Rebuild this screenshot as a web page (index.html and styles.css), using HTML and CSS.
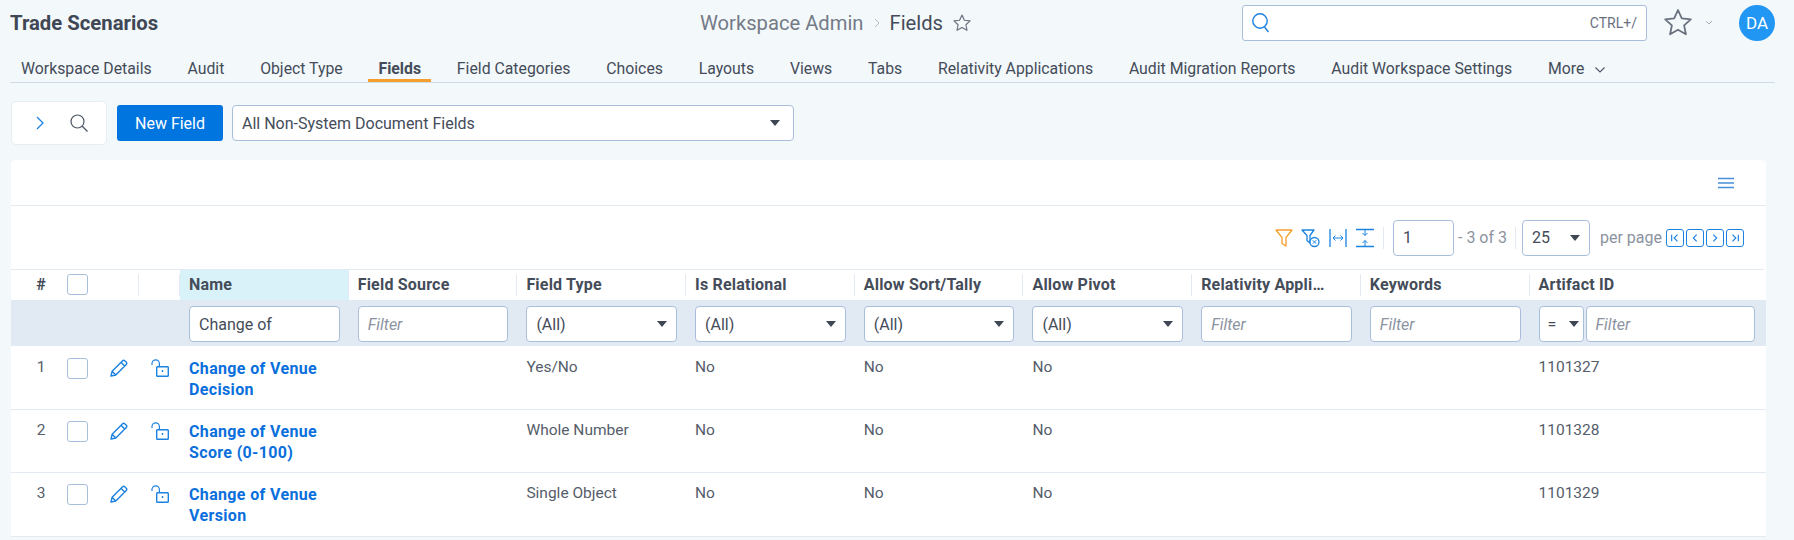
FILE: index.html
```html
<!DOCTYPE html>
<html lang="en">
<head>
<meta charset="utf-8">
<title>Fields</title>
<link rel="stylesheet" href="styles.css">
</head>
<body>
<header class="top">
  <div class="title">Trade Scenarios</div>
  <div class="crumbs">
    <span class="crumb">Workspace Admin</span>
    <svg class="crumb-sep" width="6" height="10" viewBox="0 0 6 10"><path d="M1 1l4 4-4 4" fill="none" stroke="#b4bcc8"/></svg>
    <span class="crumb current">Fields</span>
    <svg class="crumb-star" width="20" height="20" viewBox="0 0 24 24"><path d="M12 2.500l2.900 6.200 6.800.8-5 4.600 1.300 6.700-6-3.300-6 3.300 1.300-6.700-5-4.600 6.800-.8z" fill="none" stroke="#69717f" stroke-width="1.400" stroke-linejoin="round"/></svg>
  </div>
  <div class="global-search">
    <svg width="20" height="22" viewBox="0 0 20 22"><circle cx="9" cy="9" r="7.200" fill="none" stroke="#1b82e0" stroke-width="1.400"/><path d="M13.500 15l4 5" stroke="#1b82e0" stroke-width="1.400"/></svg>
    <span class="shortcut">CTRL+/</span>
  </div>
  <svg class="fav" width="30" height="30" viewBox="0 0 30 30"><path d="M15 2l3.800 8.300 9 1-6.700 6.100 1.800 8.900-7.900-4.500-7.900 4.500 1.800-8.900-6.700-6.100 9-1z" fill="none" stroke="#69717f" stroke-width="1.800" stroke-linejoin="round"/></svg>
  <svg class="fav-caret" width="8" height="6" viewBox="0 0 8 6"><path d="M1 1l3 3 3-3" fill="none" stroke="#a9b1bd"/></svg>
  <div class="avatar">DA</div>
</header>

<nav class="tabs">
  <a class="tab">Workspace Details</a>
  <a class="tab">Audit</a>
  <a class="tab">Object Type</a>
  <a class="tab active">Fields</a>
  <a class="tab">Field Categories</a>
  <a class="tab">Choices</a>
  <a class="tab">Layouts</a>
  <a class="tab">Views</a>
  <a class="tab">Tabs</a>
  <a class="tab">Relativity Applications</a>
  <a class="tab">Audit Migration Reports</a>
  <a class="tab">Audit Workspace Settings</a>
  <a class="tab">More<svg class="more-caret" width="12" height="8" viewBox="0 0 12 8"><path d="M1.500 1.500L6 6l4.500-4.500" fill="none" stroke="#4a5462" stroke-width="1.100"/></svg></a>
</nav>

<section class="actions">
  <div class="side-toggle">
    <svg width="8" height="14" viewBox="0 0 8 14"><path d="M1 1l6 6-6 6" fill="none" stroke="#1b82e0" stroke-width="1.300"/></svg>
    <svg width="20" height="20" viewBox="0 0 20 20"><circle cx="8.500" cy="8.500" r="6.500" fill="none" stroke="#4a5462" stroke-width="1.200"/><path d="M13 13l5.500 5.500" stroke="#4a5462" stroke-width="1.200"/></svg>
  </div>
  <button class="primary">New Field</button>
  <div class="select view-select"><span>All Non-System Document Fields</span><i class="arrow"></i></div>
</section>

<main class="card">
  <div class="card-head">
    <svg width="16" height="12" viewBox="0 0 16 12"><path d="M0 1.500h16M0 6h16M0 10.500h16" stroke="#4a90d9" stroke-width="1.400"/></svg>
  </div>
  <div class="pager">
    <svg class="tool" width="18" height="20" viewBox="0 0 18 20"><path d="M1 2h16l-6 7.500V18l-4-2.500V9.500z" fill="none" stroke="#f59e2e" stroke-width="1.300" stroke-linejoin="round"/></svg>
    <svg class="tool" width="19" height="20" viewBox="0 0 19 20"><path d="M1 2h12L9 7.500V15L6 12.500V7.500z" fill="none" stroke="#1b82e0" stroke-width="1.300" stroke-linejoin="round"/><circle cx="13.500" cy="14" r="4.500" fill="#fff" stroke="#1b82e0" stroke-width="1.300"/><path d="M11.800 12.300l3.400 3.400m0-3.400l-3.400 3.400" stroke="#1b82e0"/></svg>
    <svg class="tool" width="18" height="20" viewBox="0 0 18 20"><path d="M1 1v18M17 1v18" stroke="#1b82e0" stroke-width="1.300"/><path d="M4 10h10M6.500 7.500L4 10l2.500 2.500M11.500 7.500L14 10l-2.500 2.500" fill="none" stroke="#1b82e0"/></svg>
    <svg class="tool" width="18" height="20" viewBox="0 0 18 20"><path d="M0 1.500h18M0 18.500h18" stroke="#1b82e0" stroke-width="1.300"/><path d="M9 2v5.500M6.500 5L9 7.500 11.500 5M9 18v-5.500M6.500 15L9 12.500l2.500 2.500" fill="none" stroke="#1b82e0"/></svg>
    <span class="pager-sep"></span>
    <div class="input page-input">1</div>
    <span class="muted">- 3 of 3</span>
    <span class="pager-sep"></span>
    <div class="select page-size"><span>25</span><i class="arrow"></i></div>
    <span class="muted per-page">per page</span>
    <span class="page-btn"><svg width="12" height="10" viewBox="0 0 12 10"><path d="M2 1v8M9 1L5 5l4 4" fill="none" stroke="#1b82e0" stroke-width="1.400"/></svg></span>
    <span class="page-btn"><svg width="12" height="10" viewBox="0 0 12 10"><path d="M8 1L4 5l4 4" fill="none" stroke="#1b82e0" stroke-width="1.400"/></svg></span>
    <span class="page-btn"><svg width="12" height="10" viewBox="0 0 12 10"><path d="M4 1l4 4-4 4" fill="none" stroke="#1b82e0" stroke-width="1.400"/></svg></span>
    <span class="page-btn"><svg width="12" height="10" viewBox="0 0 12 10"><path d="M3 1l4 4-4 4M10 1v8" fill="none" stroke="#1b82e0" stroke-width="1.400"/></svg></span>
  </div>

  <div class="grid-row head-row">
    <div class="hd center">#</div>
    <div class="hd cb-cell"><span class="check"></span></div>
    <div class="hd"></div>
    <div class="hd ruled"></div>
    <div class="hd ruled sorted">Name</div>
    <div class="hd ruled">Field Source</div>
    <div class="hd ruled">Field Type</div>
    <div class="hd ruled">Is Relational</div>
    <div class="hd ruled">Allow Sort/Tally</div>
    <div class="hd ruled">Allow Pivot</div>
    <div class="hd ruled">Relativity Appli…</div>
    <div class="hd ruled">Keywords</div>
    <div class="hd ruled">Artifact ID</div>
  </div>

  <div class="grid-row filter-row">
    <div></div><div></div><div></div><div></div>
    <div class="fc"><div class="input">Change of</div></div>
    <div class="fc"><div class="input ph">Filter</div></div>
    <div class="fc"><div class="select"><span>(All)</span><i class="arrow"></i></div></div>
    <div class="fc"><div class="select"><span>(All)</span><i class="arrow"></i></div></div>
    <div class="fc"><div class="select"><span>(All)</span><i class="arrow"></i></div></div>
    <div class="fc"><div class="select"><span>(All)</span><i class="arrow"></i></div></div>
    <div class="fc"><div class="input ph">Filter</div></div>
    <div class="fc"><div class="input ph">Filter</div></div>
    <div class="fc artifact"><div class="select op"><span>=</span><i class="arrow"></i></div><div class="input ph">Filter</div></div>
  </div>

  <div class="grid-row data-row">
    <div class="cell center">1</div>
    <div class="cell cb-cell"><span class="check"></span></div>
    <div class="cell icon-cell"><svg class="ico" width="18" height="18" viewBox="0 0 18 18"><path d="M1 17l1.100-4.700L12.600 1.700a1.500 1.500 0 0 1 2.100 0l1.600 1.600a1.500 1.500 0 0 1 0 2.100L5.800 16zM2.100 12.300l3.700 3.700M11 3.300l3.700 3.700" fill="none" stroke="#1b82e0" stroke-width="1.400" stroke-linejoin="round"/></svg></div>
    <div class="cell icon-cell lock-cell"><svg class="ico" width="18" height="18" viewBox="0 0 18 18"><rect x="5.700" y="7.700" width="11.600" height="9.600" rx=".8" fill="none" stroke="#1b82e0" stroke-width="1.400"/><path d="M1 6V4.500a3.700 3.700 0 0 1 7.400 0v3" fill="none" stroke="#1b82e0" stroke-width="1.200"/><path d="M11.500 11v2" stroke="#1b82e0" stroke-width="1.400"/></svg></div>
    <div class="cell"><a class="link">Change of Venue Decision</a></div>
    <div class="cell"></div>
    <div class="cell">Yes/No</div>
    <div class="cell">No</div>
    <div class="cell">No</div>
    <div class="cell">No</div>
    <div class="cell"></div>
    <div class="cell"></div>
    <div class="cell">1101327</div>
  </div>
  <div class="grid-row data-row">
    <div class="cell center">2</div>
    <div class="cell cb-cell"><span class="check"></span></div>
    <div class="cell icon-cell"><svg class="ico" width="18" height="18" viewBox="0 0 18 18"><path d="M1 17l1.100-4.700L12.600 1.700a1.500 1.500 0 0 1 2.100 0l1.600 1.600a1.500 1.500 0 0 1 0 2.100L5.800 16zM2.100 12.300l3.700 3.700M11 3.300l3.700 3.700" fill="none" stroke="#1b82e0" stroke-width="1.400" stroke-linejoin="round"/></svg></div>
    <div class="cell icon-cell lock-cell"><svg class="ico" width="18" height="18" viewBox="0 0 18 18"><rect x="5.700" y="7.700" width="11.600" height="9.600" rx=".8" fill="none" stroke="#1b82e0" stroke-width="1.400"/><path d="M1 6V4.500a3.700 3.700 0 0 1 7.400 0v3" fill="none" stroke="#1b82e0" stroke-width="1.200"/><path d="M11.500 11v2" stroke="#1b82e0" stroke-width="1.400"/></svg></div>
    <div class="cell"><a class="link">Change of Venue Score (0-100)</a></div>
    <div class="cell"></div>
    <div class="cell">Whole Number</div>
    <div class="cell">No</div>
    <div class="cell">No</div>
    <div class="cell">No</div>
    <div class="cell"></div>
    <div class="cell"></div>
    <div class="cell">1101328</div>
  </div>
  <div class="grid-row data-row">
    <div class="cell center">3</div>
    <div class="cell cb-cell"><span class="check"></span></div>
    <div class="cell icon-cell"><svg class="ico" width="18" height="18" viewBox="0 0 18 18"><path d="M1 17l1.100-4.700L12.600 1.700a1.500 1.500 0 0 1 2.100 0l1.600 1.600a1.500 1.500 0 0 1 0 2.100L5.800 16zM2.100 12.300l3.700 3.700M11 3.300l3.700 3.700" fill="none" stroke="#1b82e0" stroke-width="1.400" stroke-linejoin="round"/></svg></div>
    <div class="cell icon-cell lock-cell"><svg class="ico" width="18" height="18" viewBox="0 0 18 18"><rect x="5.700" y="7.700" width="11.600" height="9.600" rx=".8" fill="none" stroke="#1b82e0" stroke-width="1.400"/><path d="M1 6V4.500a3.700 3.700 0 0 1 7.400 0v3" fill="none" stroke="#1b82e0" stroke-width="1.200"/><path d="M11.500 11v2" stroke="#1b82e0" stroke-width="1.400"/></svg></div>
    <div class="cell"><a class="link">Change of Venue Version</a></div>
    <div class="cell"></div>
    <div class="cell">Single Object</div>
    <div class="cell">No</div>
    <div class="cell">No</div>
    <div class="cell">No</div>
    <div class="cell"></div>
    <div class="cell"></div>
    <div class="cell">1101329</div>
  </div>
</main>
</body>
</html>
```
FILE: styles.css
```css
* { box-sizing: border-box; }
html, body { margin: 0; height: 540px; overflow: hidden; }
body {
  background: #f3f8fb;
  color: #444c59;
  font-family: Roboto, "Liberation Sans", sans-serif;
  font-size: 15px;
  padding: 0 0 0 10px;
}

.top { display: flex; align-items: center; height: 42px; padding-top: 3px; }
.title { width: 690px; font-size: 20.300px; font-weight: 700; color: #3f4754; }
.crumbs { display: flex; align-items: center; width: 542px; }
.crumb { font-size: 20.200px; color: #747b87; }
.crumb.current { color: #444c59; }
.crumb-sep { margin: 0 10px; }
.crumb-star { margin-left: 9px; }
.global-search {
  display: flex; align-items: center; justify-content: space-between;
  width: 405px; height: 36px; padding: 0 9px 0 8px;
  background: #fff; border: 1px solid #a9bedb; border-radius: 3px;
}
.shortcut { font-size: 14px; color: #69717f; }
.fav { margin-left: 16px; }
.fav-caret { margin-left: 12px; }
.avatar {
  width: 36px; height: 36px; margin-left: 26px; border-radius: 50%;
  background: #2196f3; color: #fff; font-size: 17px; font-weight: 400;
  display: flex; align-items: center; justify-content: center;
}

.tabs {
  display: flex; width: 1765px; height: 41px;
  padding: 15px 0 0 1px; gap: 15.800px;
  border-bottom: 1px solid #cfdde9;
}
.tab {
  padding: 1px 10px 0; height: 25px; line-height: 22px; font-size: 15.800px;
  color: #444c59; white-space: nowrap;
  border-bottom: 3px solid transparent; display: flex; align-items: flex-start;
}
.tab.active { font-weight: 700; border-bottom-color: #f59e2e; }
.more-caret { margin: 8px 0 0 10px; }

.actions { display: flex; align-items: center; gap: 10px; height: 44px; margin: 18px 0 0 1px; }
.side-toggle {
  display: flex; align-items: center; gap: 25px; width: 96px; height: 44px;
  padding-left: 24px; background: #fff; border: 1px solid #e6edf3; border-radius: 5px;
}
.primary {
  width: 106px; height: 36px; border: 0; border-radius: 3px;
  background: #0075e0; color: #fff; font: 400 16px Roboto, sans-serif;
  margin-right: -1px;
}
.select, .input {
  height: 36px; background: #fff; border: 1px solid #a9bedb; border-radius: 4px;
  display: flex; align-items: center; font-size: 16px; color: #444c59;
}
.input { padding: 0 9px; }
.input.ph { font-style: italic; color: #8c93a0; }
.select { justify-content: space-between; padding: 0 9px; }
.view-select { width: 562px; padding-right: 13px; }
.arrow { width: 0; height: 0; border: 5.500px solid transparent; border-top: 6px solid #3f4754; border-bottom: 0; }

.card { width: 1755px; margin: 15px 0 0 1px; background: #fff; border-radius: 4px 4px 0 0; }
.card-head { display: flex; align-items: center; justify-content: flex-end; height: 46px; padding: 0 32px 0 0; border-bottom: 1px solid #e3eaf1; }
.pager { display: flex; align-items: center; justify-content: flex-end; height: 63px; padding-right: 20px; }
.tool { margin-right: 9px; }
.tool:first-child { margin-right: 8px; }
.pager-sep { width: 1px; height: 22px; background: #e3eaf1; }
.tool + .pager-sep { margin: 0 9px 0 0; }
.page-input { width: 61px; }
.muted { color: #8c93a0; margin: 0 8px 0 4px; font-size: 16px; }
.page-size { width: 68px; margin-left: 6px; }
.per-page { margin: 0 4px 0 10px; }
.page-btn {
  display: flex; align-items: center; justify-content: center;
  width: 18px; height: 18px; margin-right: 2px;
  border: 1px solid #1b82e0; border-radius: 3px;
}
.page-btn svg { width: 10px; }

.grid-row { display: grid; grid-template-columns: 46px 42px 40px 41px repeat(8, 168.700px) 236.400px; }
.head-row { height: 31px; border-top: 1px solid #e3eaf1; align-items: stretch; margin-right: 2px; }
.hd {
  display: flex; align-items: center; padding: 0 0 1px 9px; font-size: 16px; font-weight: 700;
  letter-spacing: .2px; color: #444c59; white-space: nowrap; position: relative;
}
.hd.ruled::before { content: ""; position: absolute; left: -1px; top: 4px; bottom: 4px; width: 1px; background: #e3eaf1; }
.hd.sorted { background: #d9f1f9; }
.hd.center { padding-left: 14px; justify-content: center; }
.cell.center { padding-left: 14px; padding-right: 0; text-align: center; }
.hd.cb-cell { padding-left: 10px; }
.check { display: block; width: 21px; height: 21px; background: #fff; border: 1px solid #a9bedb; border-radius: 3px; }

.filter-row { height: 46px; margin-bottom: 1px; padding-top: 2px; background: #e1e9f3; align-items: center; }
.fc { padding: 0 9px; }
.artifact { display: flex; gap: 2px; padding-right: 11px; }
.artifact .input { flex: 1; }
.op { width: 45px; flex: none; padding: 0 4px 0 8px; }
.op .arrow { border-width: 5px; border-top-width: 6px; border-bottom: 0; }

.data-row { height: 63px; border-bottom: 1px solid #e3eaf1; }
.data-row:last-child { height: 64px; }
.cell { padding: 10px 9px 0; font-size: 15.500px; line-height: 21px; color: #555d6a; }
.cell.cb-cell { padding: 11px 0 0 10px; }
.cell.icon-cell { padding: 12px 0 0 11px; }
.cell.lock-cell { padding-left: 12px; }
.ico { display: block; }
.link { display: block; max-width: 140px; padding-top: 1px; font-size: 16px; letter-spacing: .35px; font-weight: 700; color: #0a6fdc; }
```
